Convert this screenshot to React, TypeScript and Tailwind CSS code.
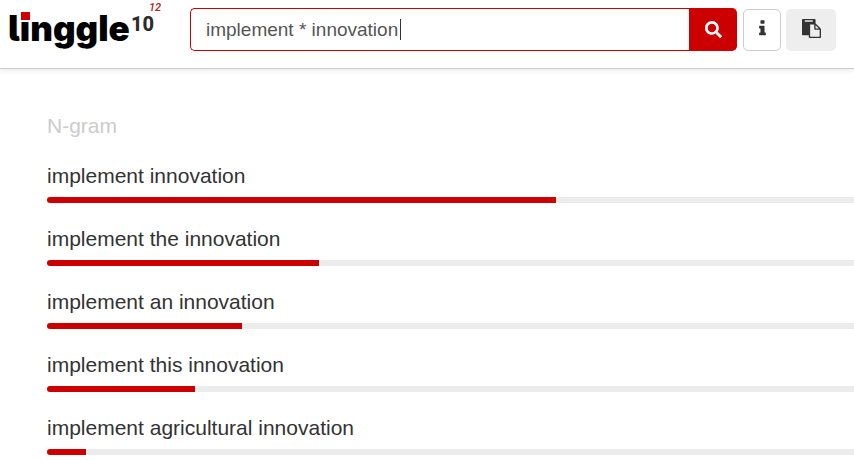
import React, { useState } from "react";
import { FaSearch } from "react-icons/fa";

type Result = { text: string; share: number };

const results: Result[] = [
  { text: "implement innovation", share: 63.1 },
  { text: "implement the innovation", share: 33.7 },
  { text: "implement an innovation", share: 24.2 },
  { text: "implement this innovation", share: 18.35 },
  { text: "implement agricultural innovation", share: 4.85 },
];

function Icon({ d }: { d: string }) {
  return (
    <svg viewBox="0 0 1792 1792" className="size-[19px] fill-current" aria-hidden="true">
      <path d={d} />
    </svg>
  );
}

const infoPath =
  "M1216 1344v128q0 26-19 45t-45 19h-512q-26 0-45-19t-19-45v-128q0-26 19-45t45-19h64v-384h-64q-26 0-45-19t-19-45v-128q0-26 19-45t45-19h384q26 0 45 19t19 45v576h64q26 0 45 19t19 45zm-128-1152v192q0 26-19 45t-45 19h-256q-26 0-45-19t-19-45v-192q0-26 19-45t45-19h256q26 0 45 19t19 45z";
const pastePath =
  "M768 1664h896v-640h-416q-40 0-68-28t-28-68v-416h-384v1152zm256-1440v-64q0-13-9.5-22.5t-22.5-9.5h-704q-13 0-22.5 9.5t-9.5 22.5v64q0 13 9.5 22.5t22.5 9.5h704q13 0 22.5-9.5t9.5-22.5zm256 672h299l-299-299v299zm512 128v672q0 40-28 68t-68 28h-960q-40 0-68-28t-28-68v-160h-544q-40 0-68-28t-28-68v-1344q0-40 28-68t68-28h1088q40 0 68 28t28 68v328q21 13 36 28l408 408q28 28 48 76t20 88z";

function Logo() {
  return (
    <a href="/" className="relative flex w-[182px] shrink-0 items-start pl-2 text-black">
      <span className="pt-[6px] font-['Inter',sans-serif] text-[35px] leading-[44px] font-black">
        <span className="[font-feature-settings:'cv05']">l</span>
        <span className="relative">
          i
          <span className="absolute top-[5px] left-px h-2 w-[9px] bg-[#d00000]" />
        </span>
        nggle
      </span>
      <span className="absolute top-[13px] left-[131px] font-['Roboto',sans-serif] text-[20px] leading-[23px] font-extrabold text-[#2b2b2b]">
        10
      </span>
      <span className="absolute top-[2px] left-[149px] font-['Roboto',sans-serif] text-[11px] leading-3 font-medium text-[#b3201f] italic">
        12
      </span>
    </a>
  );
}

export default function App() {
  const [query, setQuery] = useState("implement * innovation");
  return (
    <div className="overflow-hidden bg-white font-['Liberation_Sans',Arial,sans-serif] text-[#333]">
      <header className="flex h-[69px] items-start border-b border-[#ccc] pr-[18px] pl-0 shadow-[0_1px_5px_rgba(0,0,0,0.1)]">
        <Logo />
        <form
          className="ml-2 flex min-w-0 flex-1 items-end pt-2"
          onSubmit={(e) => e.preventDefault()}
        >
          <div className="relative min-w-0 flex-1">
            <input
              type="text"
              aria-label="Search query"
              value={query}
              onChange={(e) => setQuery(e.target.value)}
              className="block h-[43px] w-full rounded-l-[5px] border border-r-0 border-[#c00] bg-white px-[15px] text-[19px] text-[#555] outline-none"
            />
            <span className="absolute top-[11px] left-[210px] h-[21px] w-px bg-[#333]" />
          </div>
          <button
            type="submit"
            aria-label="Search"
            className="flex h-[43px] w-12 items-center justify-center rounded-r-[5px] bg-[#c00] text-white"
          >
            <FaSearch className="size-[17px]" />
          </button>
          <button
            type="button"
            aria-label="Help"
            className="ml-[6px] flex h-[42px] w-[38px] items-center justify-center rounded-[5px] border border-[#ccc] bg-white pb-[3px]"
          >
            <Icon d={infoPath} />
          </button>
          <button
            type="button"
            aria-label="Paste"
            className="ml-[5px] flex h-[42px] w-[50px] items-center justify-center rounded-[5px] bg-[#eee] pb-[3px]"
          >
            <Icon d={pastePath} />
          </button>
        </form>
      </header>

      <main className="pt-[42px] pl-[47px] text-[21px] leading-[30px]">
        <h2 className="text-[#ccc]">N-gram</h2>
        <ul className="mt-5">
          {results.map((r) => (
            <li key={r.text} className="pb-[21px] last:pb-0">
              <p>{r.text}</p>
              <div className="mt-[6px] h-[6px] overflow-hidden rounded-l-full bg-[#ececec]">
                <div className="h-full bg-[#c00]" style={{ width: `${r.share}%` }} />
              </div>
            </li>
          ))}
        </ul>
      </main>
    </div>
  );
}
